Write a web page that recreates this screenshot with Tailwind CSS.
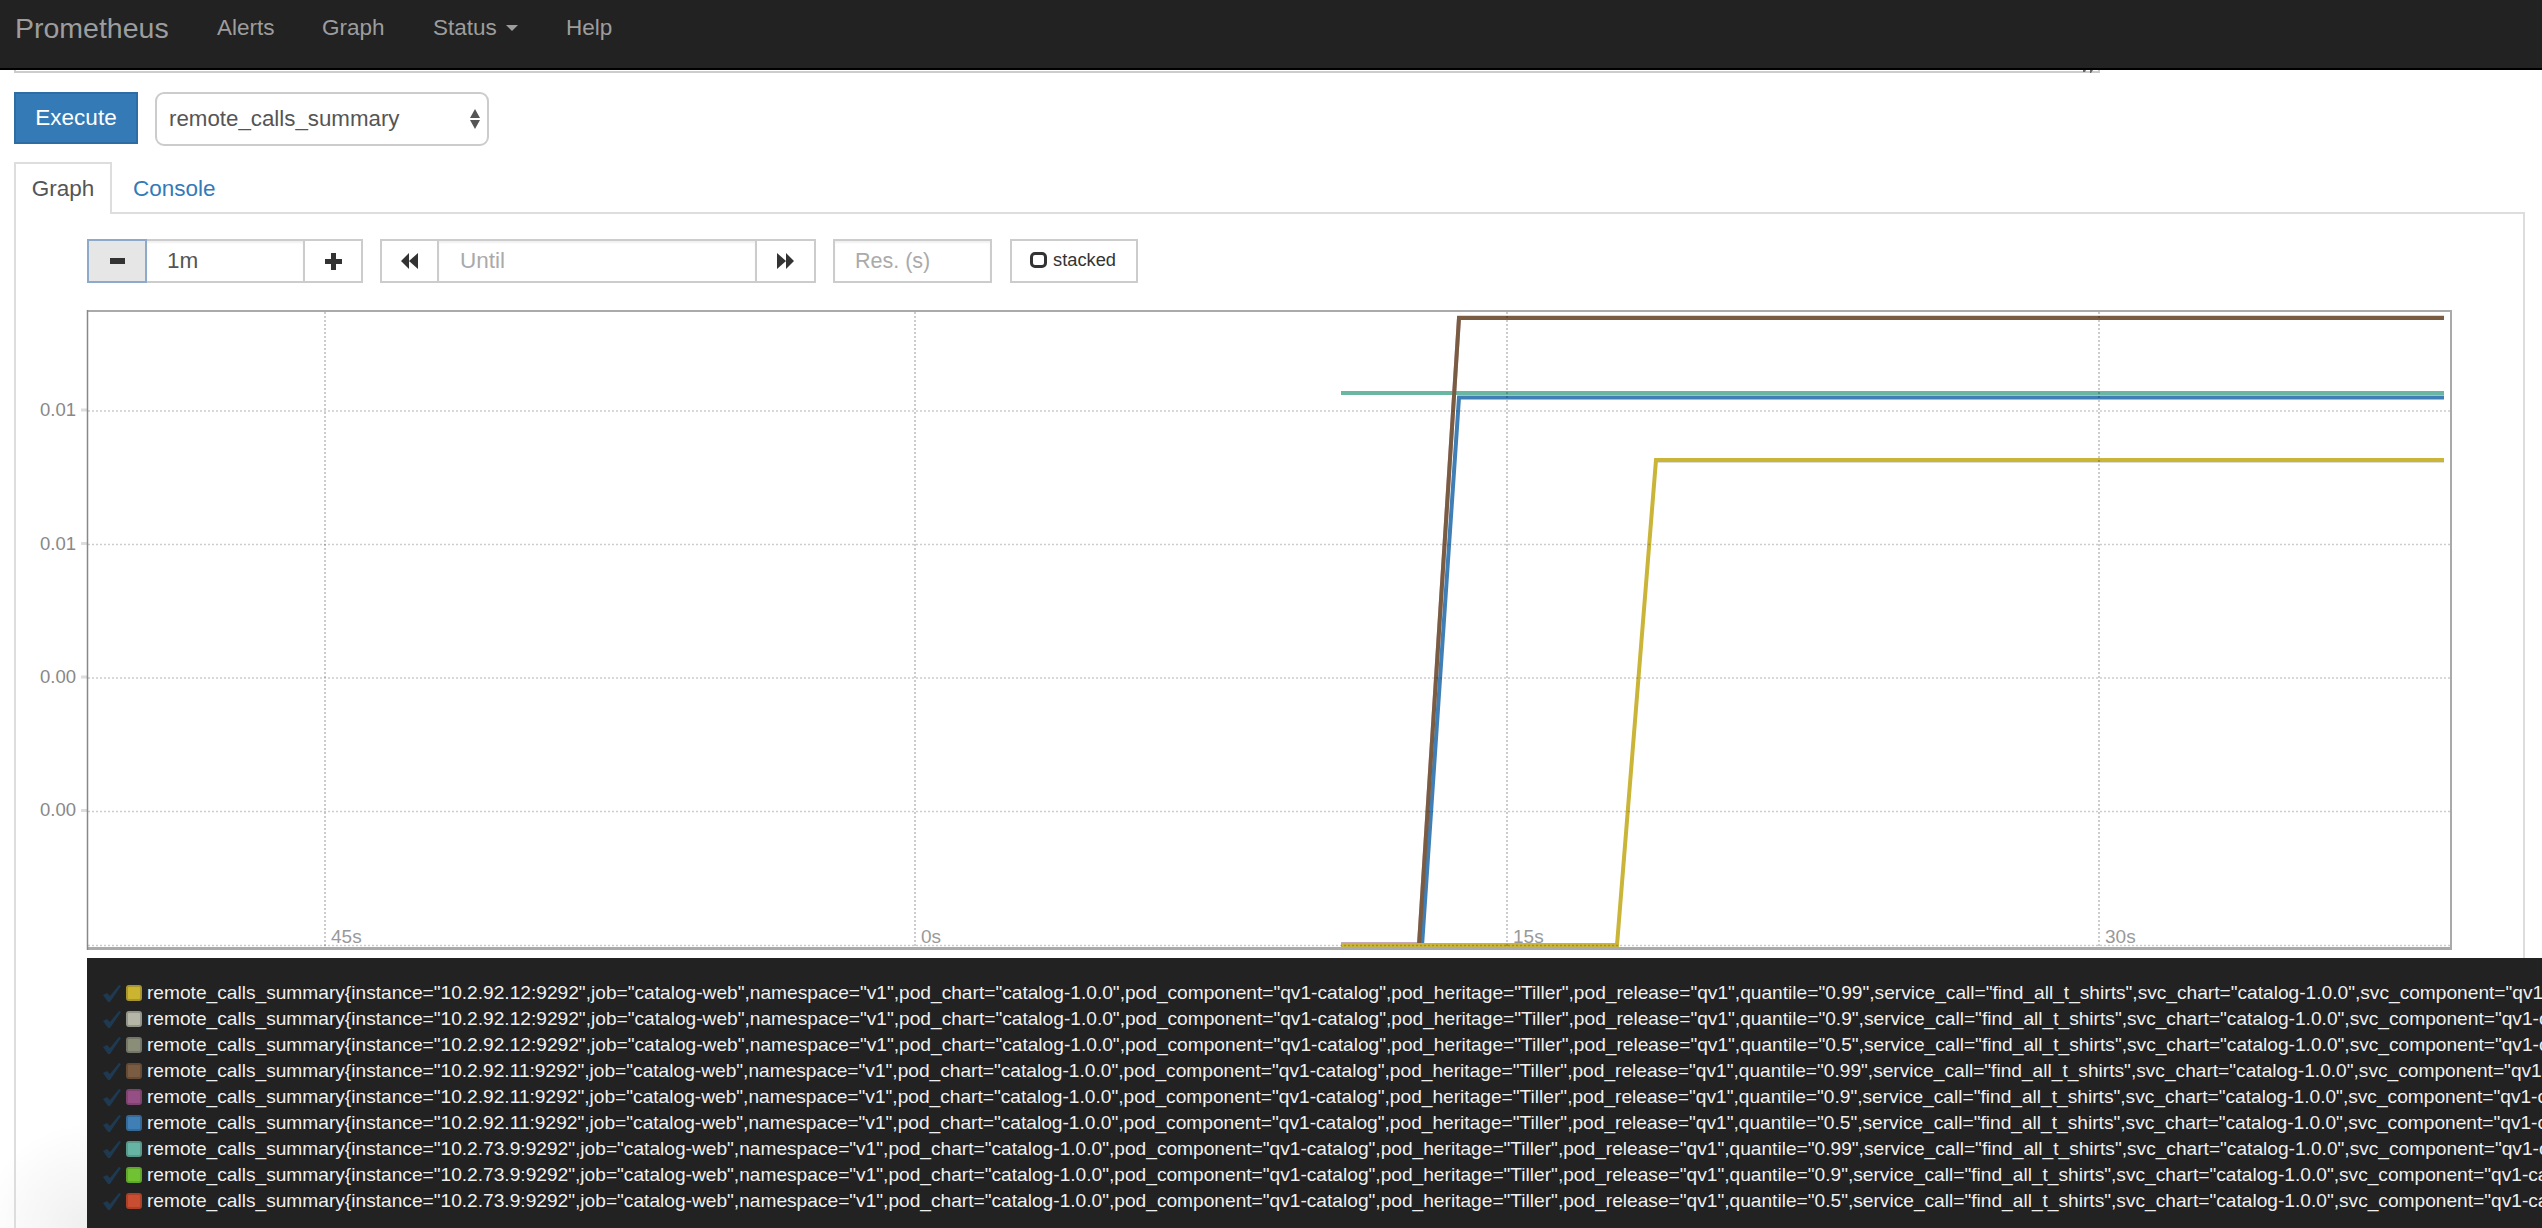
<!DOCTYPE html>
<html lang="en">
  <head>
    <meta charset="UTF-8" />
    <title>Prometheus Time Series Collection and Processing Server</title>
    <script src="https://cdn.jsdelivr.net/npm/@tailwindcss/browser@4"></script>
  </head>
  <body class="h-screen overflow-hidden bg-white bg-[radial-gradient(circle_at_87px_100%,#efefef,#fff_105px)] font-['Liberation_Sans',sans-serif] text-[#555]">
    <!-- navbar -->
    <nav class="h-[70px] bg-[#222] border-b-2 border-black flex items-start text-[#9d9d9d] text-[22.5px] leading-[56px]">
      <a class="ml-[15px] w-[202px] text-[28.500px]">Prometheus</a>
      <a class="w-[105px]">Alerts</a>
      <a class="w-[111px]">Graph</a>
      <a class="w-[133px] flex items-center gap-[9px]">Status <span class="w-0 h-0 border-x-[6px] border-x-transparent border-t-[6px] border-t-[#9d9d9d]"></span></a>
      <a>Help</a>
    </nav>
    <!-- what is left of the expression box after scrolling -->
    <div class="relative ml-[14px] w-[2086px] h-[3px] border-x-2 border-b-2 border-[#ccc]">
      <svg class="absolute right-[3px] top-0" width="14" height="3" viewBox="0 0 14 3" fill="#666"><path d="M2 0h3L4 2H2zM9 0h3L10 3H9z"/></svg>
    </div>

    <div class="mt-[19px] ml-[14px] flex gap-[17px] h-[54px]">
      <button class="w-[124px] h-[52px] bg-[#337ab7] border-2 border-[#2e6da4] text-white text-[22.5px]">Execute</button>
      <div class="w-[334px] h-[54px] border-2 border-[#ccc] rounded-[9px] pl-[12px] pr-[7px] flex items-center justify-between text-[22.3px]">
        remote_calls_summary
        <svg width="10" height="20" viewBox="0 0 10 20" fill="#555"><path d="M5 0L10 9H0zM0 11H10L5 20z"/></svg>
      </div>
    </div>

    <!-- tabs -->
    <div class="mt-[16px] ml-[14px] flex h-[52px] text-[22.5px]">
      <div class="w-[98px] h-[52px] border-2 border-b-0 border-[#ddd] bg-white relative z-10 flex items-center justify-center">Graph</div>
      <div class="ml-[21px] text-[#337ab7] leading-[54px]">Console</div>
    </div>

    <!-- panel -->
    <div class="ml-[14px] w-[2511px] -mt-[2px] h-[1016px] border-2 border-b-0 border-[#ddd] pt-[25px]">
      <div class="ml-[71px] flex h-[44px] text-[22.5px]">
        <div class="flex w-[276px] border-2 border-[#ccc]">
          <div class="-m-[2px] w-[60px] h-[44px] bg-[#e6e6e6] border-2 border-[#8eaacb] flex items-center justify-center">
            <svg width="15" height="6" viewBox="0 0 15 6" fill="#333"><rect width="15" height="6"/></svg>
          </div>
          <div class="flex-1 pl-[20px] leading-[40px] ml-[2px] shadow-[inset_0_2px_2px_rgba(0,0,0,.06)]">1m</div>
          <div class="w-[58px] border-l-2 border-[#ccc] flex items-center justify-center">
            <svg width="17" height="17" viewBox="0 0 17 17" fill="#333"><path d="M6 0h5v6h6v5h-6v6H6v-6H0V6h6z"/></svg>
          </div>
        </div>
        <div class="ml-[17px] flex w-[436px] border-2 border-[#ccc]">
          <div class="w-[57px] border-r-2 border-[#ccc] flex items-center justify-center">
            <svg width="17" height="16" viewBox="0 0 17 16" fill="#333"><path d="M8 0V16L0 8zM17 0V16L8 8z"/></svg>
          </div>
          <div class="flex-1 pl-[21px] leading-[40px] text-[#aaa] shadow-[inset_0_2px_2px_rgba(0,0,0,.06)]">Until</div>
          <div class="w-[59px] border-l-2 border-[#ccc] flex items-center justify-center">
            <svg width="17" height="16" viewBox="0 0 17 16" fill="#333"><path d="M0 0V16L9 8zM9 0V16L17 8z"/></svg>
          </div>
        </div>
        <div class="ml-[17px] w-[159px] border-2 border-[#ccc] pl-[20px] leading-[40px] text-[21.500px] text-[#aaa] shadow-[inset_0_2px_2px_rgba(0,0,0,.06)]">Res. (s)</div>
        <div class="ml-[18px] w-[128px] border-2 border-[#ccc] flex items-center pl-[18px] pb-[2px] gap-[6px] text-[18.300px] text-[#333]">
          <span class="w-[17px] h-[16px] border-[3px] border-[#333] rounded-[5px]"></span>stacked
        </div>
      </div>

      <!-- graph -->
      <svg class="block mt-[27px]" width="2450" height="640" viewBox="16 310 2450 640" font-family="Liberation Sans" font-size="19" fill="#999">
        <g fill="none" stroke-width="4">
          <path d="M1341 944H1419L1459 317.500H2444" stroke="#c9a9b8"/>
          <path d="M1341 946H1422L1459 397.500H2444" stroke="#3f7fb5"/>
          <path d="M1341 393H2444" stroke="#69b6a2"/>
          <path d="M1341 945H1419L1459 318H2444" stroke="#7a5c42"/>
          <path d="M1656 460.500H2444" stroke="#bdbdb0"/>
          <path d="M1341 945H1617L1656 460H2444" stroke="#cab538"/>
        </g>
        <g fill="none" stroke="#000" stroke-opacity=".2">
          <path stroke-width="1.500" stroke-dasharray="2 2" d="M88 411H2450M88 544.500H2450M88 678H2450M88 811.500H2450M88 945.500H2450"/>
          <path stroke-width="2" stroke-dasharray="2 2" d="M325 312V950M915 312V950M1507 312V950M2099 312V950"/>
        </g>
        <path d="M81 410H87M81 543.500H87M81 677H87M81 810.500H87" stroke="#ddd" stroke-width="3"/>
        <path d="M87 311H2451V948.500H87" fill="none" stroke="#aaa" stroke-width="2"/>
        <path d="M87 948.500H2452" stroke="#aaa" stroke-width="3"/>
        <path d="M87.500 310V950" stroke="#888" stroke-width="1.500"/>
        <g fill="#888" font-size="18.500">
          <text x="40" y="416">0.01</text>
          <text x="40" y="550">0.01</text>
          <text x="40" y="683">0.00</text>
          <text x="40" y="816">0.00</text>
        </g>
        <text x="331" y="943">45s</text>
        <text x="921" y="943">0s</text>
        <text x="1513" y="943">15s</text>
        <text x="2105" y="943">30s</text>
      </svg>

      <!-- legend, rows filled in below -->
      <div id="legend" class="ml-[71px] mt-[8px] w-[2455px] h-[270px] bg-[#222] pt-[22px] text-[#f0f0f0] text-[19.150px] leading-[26px] whitespace-nowrap overflow-hidden"></div>
    </div>

    <script>
      const series = [
        ["10.2.92.12:9292", "0.99", "#cab430", "#a89530"],
        ["10.2.92.12:9292", "0.9", "#b5b6a8", "#94958a"],
        ["10.2.92.12:9292", "0.5", "#8a8d78", "#74766a"],
        ["10.2.92.11:9292", "0.99", "#7a5c42", "#664c36"],
        ["10.2.92.11:9292", "0.9", "#964f85", "#7e4470"],
        ["10.2.92.11:9292", "0.5", "#3f7fb5", "#356a98"],
        ["10.2.73.9:9292", "0.99", "#66b5a4", "#58998a"],
        ["10.2.73.9:9292", "0.9", "#70c233", "#5fa82c"],
        ["10.2.73.9:9292", "0.5", "#c94d31", "#ab4128"],
      ];
      document.getElementById("legend").innerHTML = series
        .map(
          ([instance, quantile, color, edge]) => `
        <div class="flex h-[26px] items-center">
          <svg class="ml-[16px] mr-[5px] shrink-0" width="18" height="17" viewBox="0 0 18 17" fill="#1e3a52"><path d="M0 10L4 8L7 11L16 0L18 1L7 17H5z"/></svg>
          <span class="w-[16px] h-[16px] shrink-0 rounded-[3px] border-2" style="background:${color};border-color:${edge}"></span>
          <span class="ml-[5px]">remote_calls_summary{instance="${instance}",job="catalog-web",namespace="v1",pod_chart="catalog-1.0.0",pod_component="qv1-catalog",pod_heritage="Tiller",pod_release="qv1",quantile="${quantile}",service_call="find_all_t_shirts",svc_chart="catalog-1.0.0",svc_component="qv1-catalog"}</span>
        </div>`
        )
        .join("");
    </script>
  </body>
</html>
